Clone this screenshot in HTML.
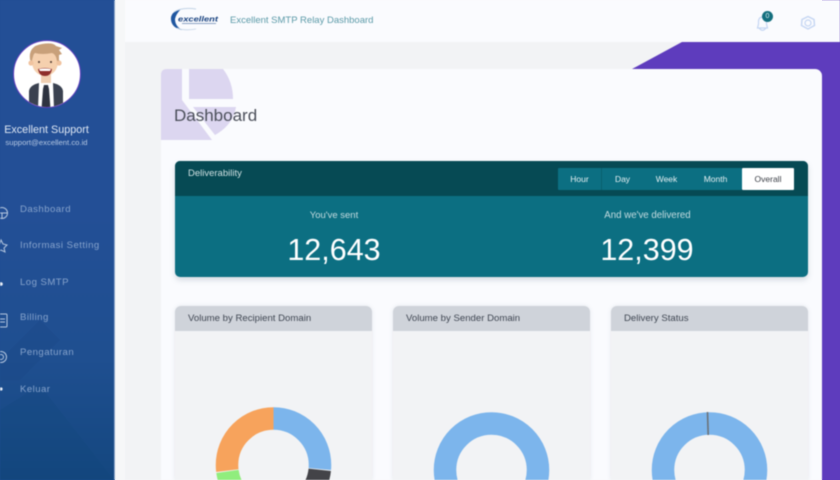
<!DOCTYPE html>
<html>
<head>
<meta charset="utf-8">
<style>
html,body{margin:0;padding:0;width:840px;height:480px;overflow:hidden;background:linear-gradient(to right,#204f92 0,#204f92 115px,#f6f7f8 115px,#f6f7f8 822px,#5e3cbd 822px);font-family:"Liberation Sans",sans-serif}
.a{position:absolute;white-space:nowrap}
#root{position:relative;width:840px;height:480px;overflow:hidden;filter:blur(.55px)}
.nav{left:20px;font-size:9.6px;color:#86a3cc;letter-spacing:.45px}
.tab{top:168px;height:22px;line-height:22px;text-align:center;font-size:8.5px;color:#e3eef1}
.card{top:306px;width:197px;height:174px;background:#f2f3f5;border-radius:6px 6px 0 0;box-shadow:0 0 4px rgba(150,160,175,.22)}
.head{left:0;top:0;width:197px;height:25px;background:#cfd3da;border-radius:6px 6px 0 0;line-height:25px;text-indent:13px;font-size:9.6px;color:#3f4652}
</style>
</head>
<body>
<div id="root">
  <!-- page background -->
  <div class="a" style="left:0;top:0;width:840px;height:480px;background:#f2f3f5"></div>
  <!-- top bar -->
  <div class="a" style="left:125px;top:0;width:715px;height:42px;background:#fafbfe"></div>
  <div class="a" style="left:115px;top:0;width:10px;height:480px;background:#f6f7f8"></div>
  <!-- purple -->
  <svg class="a" style="left:0;top:0" width="840" height="480">
    <polygon points="632,69 682,42 840,42 840,480 632,480" fill="#5e3cbd"/>
  </svg>
  <!-- main panel -->
  <div class="a" style="left:161px;top:69px;width:661px;height:411px;background:#fafbfe;border-radius:7px 7px 0 0"></div>
  <!-- watermark pie -->
  <svg class="a" style="left:161px;top:69px" width="90" height="75">
    <path d="M0 6 Q0 0 6 0 H21 V31 L51 71 H0 Z" fill="#dcd6f0"/>
    <path d="M28 0 H62 Q72 13 72 30 H28 Z" fill="#dcd6f0"/>
    <path d="M32 38 H75 Q72 56 54 66 Z" fill="#dcd6f0"/>
  </svg>
  <div class="a" style="left:174px;top:105px;font-size:17px;line-height:21px;color:#4b4f5a">Dashboard</div>

  <!-- sidebar -->
  <div class="a" style="left:0;top:0;width:115px;height:480px;background:linear-gradient(180deg,#234f96 0%,#234f96 45%,#1f4f90 75%,#14477f 100%);border-right:1px solid #8aa4c9;box-sizing:border-box"></div>
  <svg class="a" style="left:0;top:290px" width="114" height="190">
    <polygon points="0,70 40,30 60,50 20,90 0,90" fill="#1c4786" opacity=".3"/>
    <polygon points="0,120 40,95 114,190 0,190" fill="#114578" opacity=".2"/>
  </svg>
  <!-- avatar -->
  <svg class="a" style="left:12px;top:39px" width="70" height="70" viewBox="0 0 70 70">
    <defs><clipPath id="c"><circle cx="35" cy="35" r="33"/></clipPath></defs>
    <circle cx="35" cy="35" r="33.500" fill="#fff" stroke="#5e3cbd" stroke-width="1"/>
    <g clip-path="url(#c)">
      <path d="M17 70 V52 Q18 46 27 44 H41 Q50 46 51 52 V70 Z" fill="#3a4150"/>
      <path d="M26 70 L27 44 H41 L42 70 Z" fill="#fff"/>
      <path d="M32 46 H36 L37 50 L38.500 70 H29.500 L31 50 Z" fill="#2e3340"/>
      <rect x="29" y="34" width="10" height="10" fill="#efcfb2"/>
      <ellipse cx="33" cy="23" rx="13" ry="14" fill="#f5d0ae"/>
      <circle cx="19" cy="24" r="2.600" fill="#f0c39f"/><circle cx="47" cy="24" r="2.600" fill="#f0c39f"/>
      <path d="M18 21 Q16 7 30 5 Q41 3 44 7 L50 9 L47 11 L50 15 L47 16 L47 22 L45 22 Q44 15 40 14 Q30 16 23 14 Q21 16 20 22 Z" fill="#c8a07a"/>
      <circle cx="27" cy="23" r="1" fill="#4a372d"/><circle cx="39" cy="23" r="1" fill="#4a372d"/>
      <path d="M26 30 Q33 28 40 30 Q39 37 33 37 Q27 37 26 30 Z" fill="#8e2f2c"/>
      <path d="M27 30 Q33 29 39 30 L38 32 H28 Z" fill="#fff"/>
    </g>
  </svg>
  <div class="a" style="left:0;top:123.500px;width:93px;text-align:center;font-size:10.800px;line-height:13px;color:#dfe8f4">Excellent Support</div>
  <div class="a" style="left:0;top:138px;width:93px;text-align:center;font-size:7.700px;line-height:10px;color:#b4c7e2">support@excellent.co.id</div>

  <div class="a nav" style="top:204px">Dashboard</div>
  <div class="a nav" style="top:240px">Informasi Setting</div>
  <div class="a nav" style="top:277px">Log SMTP</div>
  <div class="a nav" style="top:312px">Billing</div>
  <div class="a nav" style="top:347px">Pengaturan</div>
  <div class="a nav" style="top:384px">Keluar</div>

  <svg class="a" style="left:0;top:200px" width="12" height="200" fill="none" stroke="#b5c7e0" stroke-width="1">
    <circle cx="2" cy="13" r="5.500"/><path d="M-1 13 H7 M2 13 V19"/>
    <path d="M1 40 L3 44 L7 45 L4 48 L5 52 L1 50 L-3 52 Z"/>
    <circle cx="1" cy="84" r="1.800" fill="#e8eef7" stroke="none"/>
    <rect x="-4" y="114" width="11" height="13" rx="1"/><path d="M-1 119 H5 M-1 122 H5"/>
    <circle cx="1" cy="157" r="5.500"/><circle cx="1" cy="157" r="2.500"/>
    <circle cx="1" cy="189" r="1.600" fill="#e8eef7" stroke="none"/>
  </svg>

  <!-- logo -->
  <svg class="a" style="left:168px;top:6px" width="54" height="26" viewBox="0 0 54 26">
    <path d="M3 14 Q2 6 13 3 Q8 8 7 13 Q7 20 14 24 Q4 22 3 14 Z" fill="#1f56a0"/>
    <path d="M6 6 Q14 1 28 3" fill="none" stroke="#c3d4e6" stroke-width="1"/>
    <path d="M9 22 Q16 25 28 23" fill="none" stroke="#c7d6e8" stroke-width=".8"/>
    <rect x="14" y="17" width="34" height="1" fill="#8aa2c3"/>
    <text x="10" y="15.500" font-size="7" font-weight="bold" font-style="italic" fill="#17417f" textLength="40" lengthAdjust="spacingAndGlyphs">excellent</text>
  </svg>
  <div class="a" style="left:230px;top:15px;font-size:9.500px;line-height:12px;color:#5b9aa8">Excellent SMTP Relay Dashboard</div>

  <!-- bell & gear -->
  <svg class="a" style="left:750px;top:8px" width="70" height="26" fill="none" stroke="#c5d6f3" stroke-width="1.200">
    <path d="M7.500 20 Q8 18 8.500 16 V13 Q9 9 12.500 9 Q16 9 16.500 13 V16 Q17 18 17.500 20 Z"/>
    <path d="M9 20 Q12.500 24.500 16 20"/>
    <path d="M58 8.500 L64 11.500 L64.500 17.500 L58 21 L51.500 17.500 L52 11.500 Z" stroke-width="1.400"/>
    <circle cx="58" cy="15" r="3"/>
  </svg>
  <div class="a" style="left:762px;top:11px;width:11px;height:11px;border-radius:50%;background:#146f7e;color:#d8ecef;font-size:7px;line-height:11px;text-align:center">0</div>

  <!-- deliverability -->
  <div class="a" style="left:175px;top:161px;width:633px;height:116px;border-radius:5px;background:#0c6f82;box-shadow:0 3px 6px rgba(130,145,160,.3);overflow:hidden">
    <div style="position:absolute;left:0;top:0;width:633px;height:35px;background:#064a54"></div>
  </div>
  <div class="a" style="left:188px;top:167px;font-size:9.500px;line-height:13px;color:#cfe0e2">Deliverability</div>
  <div class="a" style="left:558px;top:168px;width:184px;height:22px;background:#0c6f82;border-radius:1px"></div>
  <div class="a" style="left:601px;top:168px;width:1px;height:22px;background:#085f6e"></div>
  <div class="a" style="left:742px;top:168px;width:52px;height:22px;background:#fff;border-radius:1px"></div>
  <div class="a tab" style="left:558px;width:43px">Hour</div>
  <div class="a tab" style="left:602px;width:41px">Day</div>
  <div class="a tab" style="left:645px;width:43px">Week</div>
  <div class="a tab" style="left:693px;width:45px">Month</div>
  <div class="a tab" style="left:742px;width:52px;color:#3b3f46">Overall</div>

  <div class="a" style="left:234px;top:209px;width:200px;text-align:center;font-size:9.500px;line-height:13px;color:#c5dce0">You've sent</div>
  <div class="a" style="left:234px;top:232px;width:200px;text-align:center;font-size:30.500px;line-height:36px;color:#fff">12,643</div>
  <div class="a" style="left:547.500px;top:209px;width:200px;text-align:center;font-size:9.700px;line-height:13px;color:#c5dce0">And we've delivered</div>
  <div class="a" style="left:547px;top:232px;width:200px;text-align:center;font-size:30.500px;line-height:36px;color:#fff">12,399</div>

  <!-- cards -->
  <div class="a card" style="left:175px"><div class="a head">Volume by Recipient Domain</div></div>
  <div class="a card" style="left:393px"><div class="a head">Volume by Sender Domain</div></div>
  <div class="a card" style="left:611px"><div class="a head">Delivery Status</div></div>

  <!-- donuts -->
  <svg class="a" style="left:0;top:0" width="840" height="480" fill="none" stroke-width="22.500">
    <g transform="rotate(-90 273.500 465)">
      <circle cx="273.500" cy="465" r="46.500" pathLength="360" stroke="#7cb5ec" stroke-dasharray="95 265"/>
      <circle cx="273.500" cy="465" r="46.500" pathLength="360" stroke="#434348" stroke-dasharray="45 315" stroke-dashoffset="-96"/>
      <circle cx="273.500" cy="465" r="46.500" pathLength="360" stroke="#90ed7d" stroke-dasharray="80 280" stroke-dashoffset="-182"/>
      <circle cx="273.500" cy="465" r="46.500" pathLength="360" stroke="#f7a35c" stroke-dasharray="97 263" stroke-dashoffset="-263"/>
    </g>
    <circle cx="491.500" cy="470" r="46.500" stroke="#7cb5ec"/>
    <circle cx="709.500" cy="470" r="46.500" stroke="#7cb5ec"/>
    <path d="M707.500 412 L708.200 435" stroke="#6c7278" stroke-width="1.600"/>
  </svg>
</div>
</body>
</html>
